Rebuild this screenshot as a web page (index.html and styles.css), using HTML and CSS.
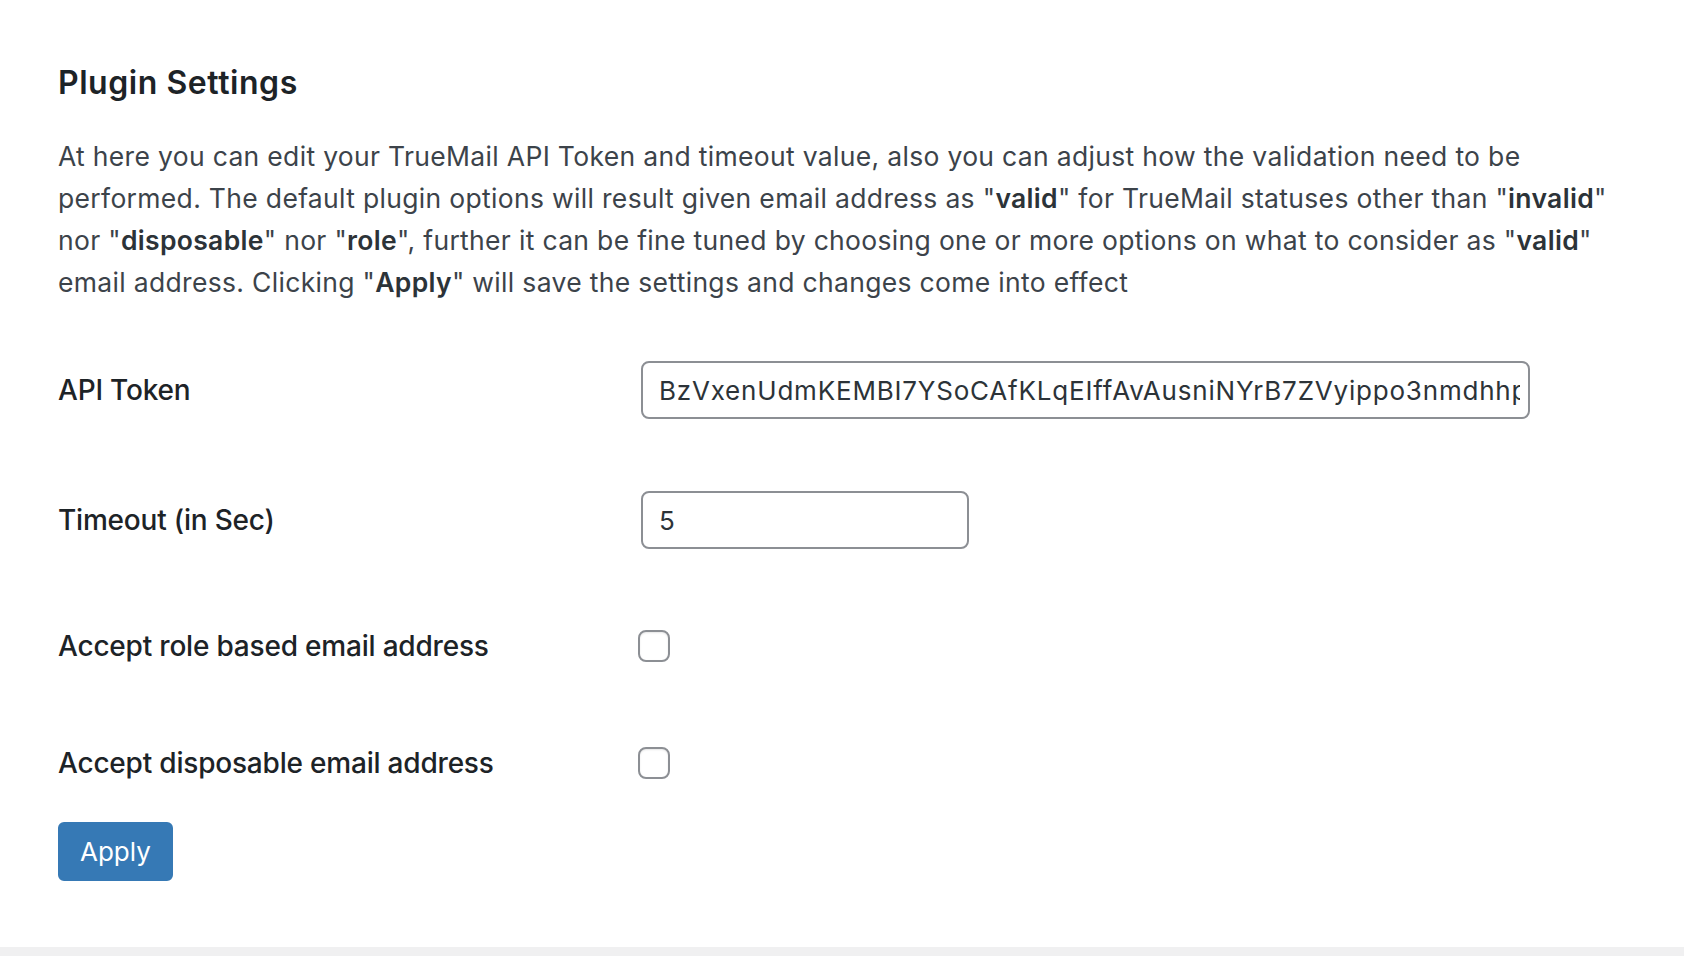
FILE: index.html
```html
<!DOCTYPE html>
<html lang="en">
<head>
<meta charset="utf-8">
<title>Plugin Settings</title>
<link rel="stylesheet" href="styles.css">
</head>
<body>
<div class="panel">
  <h2 class="title">Plugin Settings</h2>
  <p class="intro">At here you can edit your TrueMail API Token and timeout value, also you can adjust how the validation need to be performed. The default plugin options will result given email address as "<b>valid</b>" for TrueMail statuses other than "<b>invalid</b>" nor "<b>disposable</b>" nor "<b>role</b>", further it can be fine tuned by choosing one or more options on what to consider as "<b>valid</b>" email address. Clicking "<b>Apply</b>" will save the settings and changes come into effect</p>
  <form class="settings">
    <div class="row row-tall">
      <label class="label" for="api-token">API Token</label>
      <div class="control"><input id="api-token" class="text-input token-input" type="text" value="BzVxenUdmKEMBI7YSoCAfKLqEIffAvAusniNYrB7ZVyippo3nmdhhpQ4kT9xWs"></div>
    </div>
    <div class="row row-tall">
      <label class="label" for="timeout">Timeout (in Sec)</label>
      <div class="control"><input id="timeout" class="text-input timeout-input" type="text" value="5"></div>
    </div>
    <div class="row row-check1">
      <label class="label" for="accept-role">Accept role based email address</label>
      <div class="control"><input id="accept-role" class="checkbox" type="checkbox"></div>
    </div>
    <div class="row row-check2">
      <label class="label" for="accept-disposable">Accept disposable email address</label>
      <div class="control"><input id="accept-disposable" class="checkbox" type="checkbox"></div>
    </div>
    <button class="button-primary" type="button">Apply</button>
  </form>
</div>
</body>
</html>
```

FILE: styles.css
```css
html, body {
  margin: 0;
  padding: 0;
}
body {
  background: #f0f0f1;
  font-family: Inter, "Noto Sans", "Liberation Sans", sans-serif;
  color: #3c434a;
}
.panel {
  background: #ffffff;
  padding: 63px 50px 66px 58px;
}
.title {
  margin: 0;
  font-size: 32px;
  line-height: 39px;
  font-weight: 600;
  color: #1d2327;
  letter-spacing: 0.55px;
}
.intro {
  margin: 33px 0 0 0;
  font-size: 26.5px;
  line-height: 42px;
  color: #3c434a;
  letter-spacing: 0.32px;
}
.intro b {
  font-weight: 600;
  color: #2c3338;
}
.settings {
  margin-top: 22px;
  display: flex;
  flex-direction: column;
}
.row {
  display: flex;
  align-items: center;
}
.row-tall {
  height: 130px;
}
.row-check1 {
  height: 122px;
}
.row-check2 {
  height: 112px;
}
.label {
  width: 583px;
  flex: 0 0 583px;
  font-size: 28px;
  line-height: 36px;
  font-weight: 500;
  color: #1d2327;
  letter-spacing: -0.2px;
}
.control {
  flex: 1 1 auto;
  display: flex;
  align-items: center;
}
.text-input {
  box-sizing: border-box;
  height: 58px;
  border: 2px solid #8c8f94;
  border-radius: 8px;
  padding: 0 8px 0 16px;
  font-family: Inter, "Noto Sans", "Liberation Sans", sans-serif;
  font-size: 26px;
  color: #2c3338;
  background: #ffffff;
  outline: none;
  margin: 0;
}
.token-input {
  width: 889px;
  letter-spacing: 0.8px;
}
.timeout-input {
  width: 328px;
}
.checkbox {
  -webkit-appearance: none;
  appearance: none;
  box-sizing: border-box;
  width: 32px;
  height: 32px;
  margin: 0 0 0 -3px;
  border: 2px solid #8c8f94;
  border-radius: 8px;
  background: #ffffff;
  box-shadow: inset 0 1px 2px rgba(0, 0, 0, 0.1);
}
.button-primary {
  align-self: flex-start;
  margin-top: 3px;
  box-sizing: border-box;
  height: 59px;
  padding: 0 20px;
  border: 2px solid #3679b5;
  border-radius: 6px;
  background: #3679b5;
  color: #ffffff;
  font-family: Inter, "Noto Sans", "Liberation Sans", sans-serif;
  font-size: 26px;
  cursor: pointer;
}
```
